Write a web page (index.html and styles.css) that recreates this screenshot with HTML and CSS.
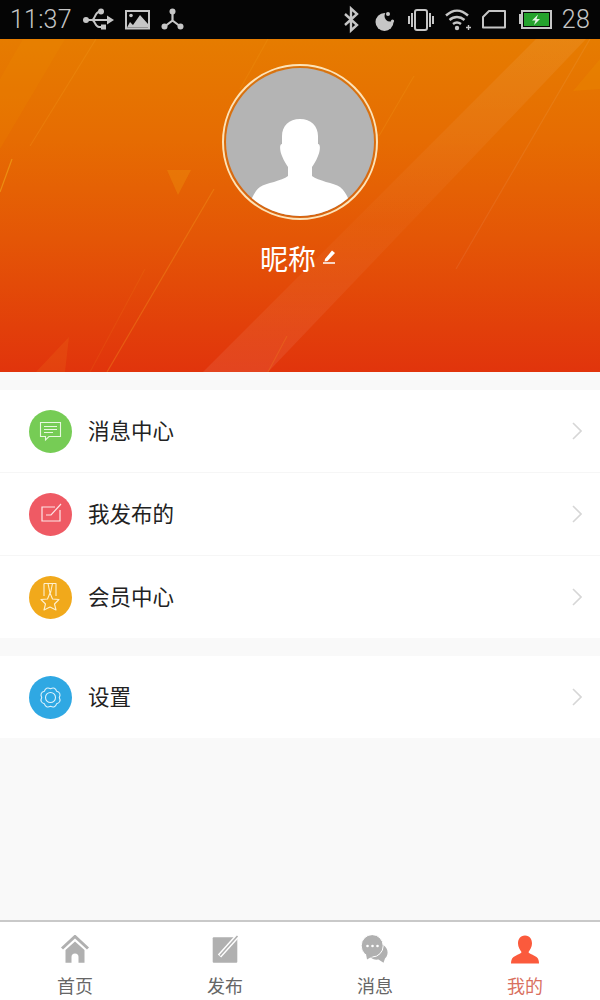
FILE: index.html
```html
<!DOCTYPE html>
<html lang="zh-CN">
<head>
<meta charset="utf-8">
<title>我的</title>
<link rel="stylesheet" href="styles.css">
</head>
<body>
<div class="page">
  <header class="status">
    <div class="status-group">
      <span class="status-text status-time">11:37</span>
      <svg class="si" width="32" height="39" viewBox="0 0 32 39"><g fill="none" stroke="#c6c6c6" stroke-width="2"><path d="M3 20H26"/><path d="M9 20C12 20 12 12 16 12H19"/><path d="M9 20C12 20 12 27 16 27H20"/></g><circle cx="3" cy="20" r="3" fill="#c6c6c6"/><circle cx="18" cy="11.500" r="3" fill="#c6c6c6"/><rect x="18" y="24.500" width="5" height="5" fill="#c6c6c6"/><path d="M24 15.500L31 20L24 24.500Z" fill="#c6c6c6"/></svg>
      <svg class="si" width="26" height="39" viewBox="0 0 26 39"><rect x="0" y="10" width="25" height="19.500" fill="#c6c6c6"/><rect x="2" y="12" width="21" height="15.500" fill="#050505"/><path d="M2 27.500L5 22L8 25L15 15L23 24V27.500Z" fill="#c6c6c6"/><circle cx="6" cy="15.500" r="1.800" fill="#c6c6c6"/></svg>
      <svg class="si" width="23" height="39" viewBox="0 0 23 39"><path d="M11.500 11V20.500L3 27M11.500 20.500L20 27" fill="none" stroke="#c6c6c6" stroke-width="2.200"/><circle cx="11.500" cy="11.500" r="3" fill="#c6c6c6"/><circle cx="3.500" cy="26.500" r="3" fill="#c6c6c6"/><circle cx="19.500" cy="26.500" r="3" fill="#c6c6c6"/></svg>
    </div>
    <div class="status-group">
      <svg class="si" width="21" height="39" viewBox="0 0 21 39"><path d="M1 14L13 25L7 30.500V8.500L13 14L1 25" fill="none" stroke="#c6c6c6" stroke-width="2.400"/></svg>
      <svg class="si" width="23" height="39" viewBox="0 0 23 39"><circle cx="9.500" cy="22" r="9" fill="#c6c6c6"/><circle cx="15" cy="16" r="5.500" fill="#050505"/><circle cx="13" cy="14" r="2" fill="#c6c6c6"/><circle cx="17.500" cy="21" r="1.600" fill="#c6c6c6"/></svg>
      <svg class="si" width="27" height="39" viewBox="0 0 27 39"><rect x="7" y="10" width="12" height="20" rx="2" fill="none" stroke="#c6c6c6" stroke-width="2"/><path d="M4 13V27M1 16V24M22 13V27M25 16V24" stroke="#c6c6c6" stroke-width="2"/></svg>
      <svg class="si" width="27" height="39" viewBox="0 0 27 39"><g fill="none" stroke="#c6c6c6" stroke-width="2.400"><path d="M1 15.500C8 9 16 9 23 15.500"/><path d="M4.500 20C9 16 15 16 19.500 20"/><path d="M8 24C10.500 22 13.500 22 16 24"/></g><circle cx="12" cy="28" r="2.200" fill="#c6c6c6"/><path d="M21 27.500H26M23.500 25V30" stroke="#c6c6c6" stroke-width="1.400"/></svg>
      <svg class="si" width="27" height="39" viewBox="0 0 27 39"><path d="M7 11H23V27.500H1V17Z" fill="none" stroke="#c6c6c6" stroke-width="2" stroke-linejoin="round"/></svg>
      <svg class="si" width="33" height="39" viewBox="0 0 33 39"><rect x="-1" y="14" width="3" height="10" fill="#c6c6c6"/><rect x="3" y="11" width="29" height="17" fill="none" stroke="#c6c6c6" stroke-width="2"/><rect x="5" y="13" width="25" height="13" fill="#25a32d"/><path d="M19 14.500L13 20.500H16.500L15 25L21 19H17.500Z" fill="#e6f3e6"/></svg>
      <span class="status-text">28</span>
    </div>
  </header>

  <section class="hero">
    <svg class="hero-art" width="600" height="333" viewBox="0 0 600 333">
      <defs>
        <linearGradient id="stripe-fade" x1="0" y1="0" x2="0" y2="1">
          <stop offset="0" stop-color="#fff" stop-opacity=".07"/>
          <stop offset=".55" stop-color="#fff" stop-opacity=".025"/>
          <stop offset="1" stop-color="#fff" stop-opacity=".08"/>
        </linearGradient>
      </defs>
      <path d="M536 0H586L268 333H203Z" fill="url(#stripe-fade)"/>
      <path d="M23 0H65L0 110V40Z" fill="#f0a000" fill-opacity=".12"/>
      <path d="M600 20V50L573 52Z" fill="#f0a000" fill-opacity=".18"/>
      <g fill="none" stroke-width="1.200">
        <path d="M96 0L30 107" stroke="#f5a623" stroke-opacity=".22"/>
        <path d="M268 0L240 50" stroke="#f5a623" stroke-opacity=".18"/>
        <path d="M414 37L379 97" stroke="#f5a623" stroke-opacity=".2"/>
        <path d="M590 0L456 230" stroke="#fff" stroke-opacity=".07"/>
        <path d="M214 150L107 333" stroke="#f5a623" stroke-opacity=".3"/>
        <path d="M287 297L268 333" stroke="#f5a623" stroke-opacity=".2"/>
        <path d="M12 120L0 153" stroke="#f5c023" stroke-opacity=".45"/>
        <path d="M145 230L90 333" stroke="#f5a623" stroke-opacity=".1"/>
      </g>
      <path d="M167 131H191L178 156Z" fill="#f09a10" fill-opacity=".32"/>
      <path d="M69 298L36 333H65Z" fill="#f08a20" fill-opacity=".16"/>
    </svg>
    <svg class="avatar" width="156" height="156" viewBox="0 0 156 156">
      <defs><clipPath id="avatar-clip"><circle cx="78" cy="78" r="74"/></clipPath></defs>
      <circle cx="78" cy="78" r="77" fill="#c9701e" fill-opacity=".5" stroke="#fde3b8" stroke-width="2"/>
      <circle cx="78" cy="78" r="74" fill="#b4b4b4"/>
      <path clip-path="url(#avatar-clip)" fill="#fff" d="M78 55C67 55 60 62 60 72V80C57 80 58 88 60 92C62 97 64 100 66 103V112C60 117 44 119 38 123C34 126 32 130 30 134L30 156H126V134C124 130 122 126 118 123C112 119 96 117 90 112V103C92 100 94 97 96 92C98 88 99 80 96 80V72C96 62 89 55 78 55Z"/>
    </svg>
    <div class="name-row">
      <span class="name">昵称</span>
      <svg class="name-edit" width="14" height="16" viewBox="0 0 14 16"><path d="M3 11L10 2.500L13 5L5.500 13L2.500 13.500Z" fill="#fff"/><path d="M1 15H13" stroke="#fff" stroke-width="1.500"/></svg>
    </div>
  </section>

  <main class="content">
    <ul class="menu">
      <li class="row">
        <svg class="row-icon" width="43" height="43" viewBox="0 0 43 43"><circle cx="21.500" cy="21.500" r="21.500" fill="#76cc55"/><path d="M11.500 12.500H31.500V26.500H20L16.500 30V26.500H11.500Z M15 16.500H28M15 19.500H28M15 22.500H24" fill="none" stroke="#e8f8e0" stroke-width="1.100"/></svg>
        <span class="row-label">消息中心</span>
        <svg class="chev" width="10" height="18" viewBox="0 0 10 18"><path d="M1 1L9 9L1 17" fill="none" stroke="#d6d6d6" stroke-width="1.600"/></svg>
      </li>
      <li class="row">
        <svg class="row-icon" width="43" height="43" viewBox="0 0 43 43"><circle cx="21.500" cy="21.500" r="21.500" fill="#ef5a64"/><path d="M26 14H13V28H31V17M17 22H22L32 11" fill="none" stroke="#fde6e6" stroke-width="1.200"/></svg>
        <span class="row-label">我发布的</span>
        <svg class="chev" width="10" height="18" viewBox="0 0 10 18"><path d="M1 1L9 9L1 17" fill="none" stroke="#d6d6d6" stroke-width="1.600"/></svg>
      </li>
      <li class="row">
        <svg class="row-icon" width="43" height="43" viewBox="0 0 43 43"><circle cx="21.500" cy="21.500" r="21.500" fill="#f1a91b"/><path d="M15 7.500H27V20M15 7.500V20M19 7.500L21 17M23.500 7.500L21.500 17M21 17L23.500 23L30 23.500L25.500 28L27 34L21 31L15 34L16.500 28L12 23.500L18.500 23Z" fill="none" stroke="#fdf0cf" stroke-width="1.100" stroke-linejoin="round"/></svg>
        <span class="row-label">会员中心</span>
        <svg class="chev" width="10" height="18" viewBox="0 0 10 18"><path d="M1 1L9 9L1 17" fill="none" stroke="#d6d6d6" stroke-width="1.600"/></svg>
      </li>
    </ul>
    <ul class="menu">
      <li class="row">
        <svg class="row-icon" width="43" height="43" viewBox="0 0 43 43"><circle cx="21.500" cy="21.500" r="21.500" fill="#2fa8e3"/><path d="M30.300 21.500Q32.600 26.100 27.700 27.700Q26.100 32.600 21.500 30.300Q16.900 32.600 15.300 27.700Q10.400 26.100 12.700 21.500Q10.400 16.900 15.300 15.300Q16.900 10.400 21.500 12.700Q26.100 10.400 27.700 15.300Q32.600 16.900 30.300 21.500Z" fill="none" stroke="#dff2fb" stroke-width="1.100"/><circle cx="21.500" cy="21.500" r="5" fill="none" stroke="#dff2fb" stroke-width="1.100"/></svg>
        <span class="row-label">设置</span>
        <svg class="chev" width="10" height="18" viewBox="0 0 10 18"><path d="M1 1L9 9L1 17" fill="none" stroke="#d6d6d6" stroke-width="1.600"/></svg>
      </li>
    </ul>
  </main>

  <nav class="tabs">
    <div class="tab">
      <svg class="tab-icon" width="30" height="30" viewBox="0 0 30 30"><path d="M2 13.500L15 1.500L28 13.500" fill="none" stroke="#b0b0b0" stroke-width="3"/><path d="M15 6.500L24.500 15V27.700H18.500V22A3.500 3.500 0 0 0 11.500 22V27.700H5.500V15Z" fill="#b0b0b0"/></svg>
      <span class="tab-label">首页</span>
    </div>
    <div class="tab">
      <svg class="tab-icon" width="30" height="30" viewBox="0 0 30 30"><rect x="2.700" y="2.300" width="24.600" height="25.400" rx="1" fill="#b0b0b0"/><path d="M9.500 21L27.500 1" stroke="#fff" stroke-width="4.500"/><path d="M10 20.500L27.500 1" stroke="#b0b0b0" stroke-width="1.600"/></svg>
      <span class="tab-label">发布</span>
    </div>
    <div class="tab">
      <svg class="tab-icon" width="30" height="30" viewBox="0 0 30 30"><path d="M21 9C27.500 11 30 19 25 23.500L23.500 27.700L18.500 24.500C15 25 12 24 10 22Z" fill="#b0b0b0"/><ellipse cx="12.200" cy="10.800" rx="11" ry="11.200" fill="#b0b0b0" stroke="#fff" stroke-width="1"/><path d="M6 19L7 24.500L13 21Z" fill="#b0b0b0"/><circle cx="7.500" cy="11" r="1.300" fill="#fff"/><circle cx="12.500" cy="11" r="1.300" fill="#fff"/><circle cx="17.500" cy="11" r="1.300" fill="#fff"/></svg>
      <span class="tab-label">消息</span>
    </div>
    <div class="tab tab-active">
      <svg class="tab-icon" width="30" height="30" viewBox="0 0 30 30"><path d="M15 0.500C10 0.500 8 4.500 8 8.500C8 12 10 15 11.500 17C11 19 7 19.500 3.500 22C1.500 23.500 1 26 1 28.500H29C29 26 28.500 23.500 26.500 22C23 19.500 19 19 18.500 17C20 15 22 12 22 8.500C22 4.500 20 0.500 15 0.500Z" fill="#fb5a3c"/></svg>
      <span class="tab-label">我的</span>
    </div>
  </nav>
</div>
</body>
</html>
```
FILE: styles.css
```css
* { box-sizing: border-box; }
html, body { margin: 0; padding: 0; }
body { font-family: "Noto Sans CJK SC", "Noto Sans", sans-serif; background: #f9f9f9; }
ul { list-style: none; margin: 0; padding: 0; }
svg { display: block; flex: none; }

.page { width: 600px; height: 1000px; display: flex; flex-direction: column; overflow: hidden; }

.status { height: 39px; flex: none; background: #050505; display: flex; justify-content: space-between; align-items: center; padding: 0 10px; }
.status-group { display: flex; align-items: center; gap: 10px; }
.status-text { font-family: Roboto, sans-serif; font-weight: 300; font-size: 25px; line-height: 39px; color: #c6c6c6; letter-spacing: .2px; }
.status-time { min-width: 63px; }

.hero { position: relative; height: 333px; flex: none; display: flex; flex-direction: column; align-items: center; padding-top: 25px; overflow: hidden; background: linear-gradient(180deg, #e67c00 0%, #e66c02 30%, #e45606 60%, #e1340c 100%); }
.hero-art { position: absolute; left: 0; top: 0; }
.avatar { position: relative; }
.name-row { position: relative; display: flex; align-items: flex-end; gap: 6px; margin-top: 18px; padding-right: 4px; height: 40px; }
.name { font-size: 28px; line-height: 40px; color: #fff; }
.name-edit { margin-bottom: 14px; }

.content { flex: 1; display: flex; flex-direction: column; gap: 18px; padding-top: 18px; background: #f9f9f9; }
.menu { background: #fff; }
.row { height: 83px; display: flex; align-items: center; padding: 0 18px 0 29px; gap: 16px; border-bottom: 1px solid #f6f6f6; }
.row:last-child { height: 82px; border-bottom: 0; }
.row-label { flex: 1; font-size: 21.500px; line-height: 30px; padding-bottom: 2px; color: #222; }

.tabs { height: 80px; flex: none; display: grid; grid-template-columns: repeat(4, 1fr); background: #fff; border-top: 2px solid #c9c9c9; }
.tab { display: flex; flex-direction: column; align-items: center; padding-top: 13px; color: #666; }
.tab-label { font-size: 18px; line-height: 26px; margin-top: 7px; }
.tab-active { color: #d9705f; }
```
